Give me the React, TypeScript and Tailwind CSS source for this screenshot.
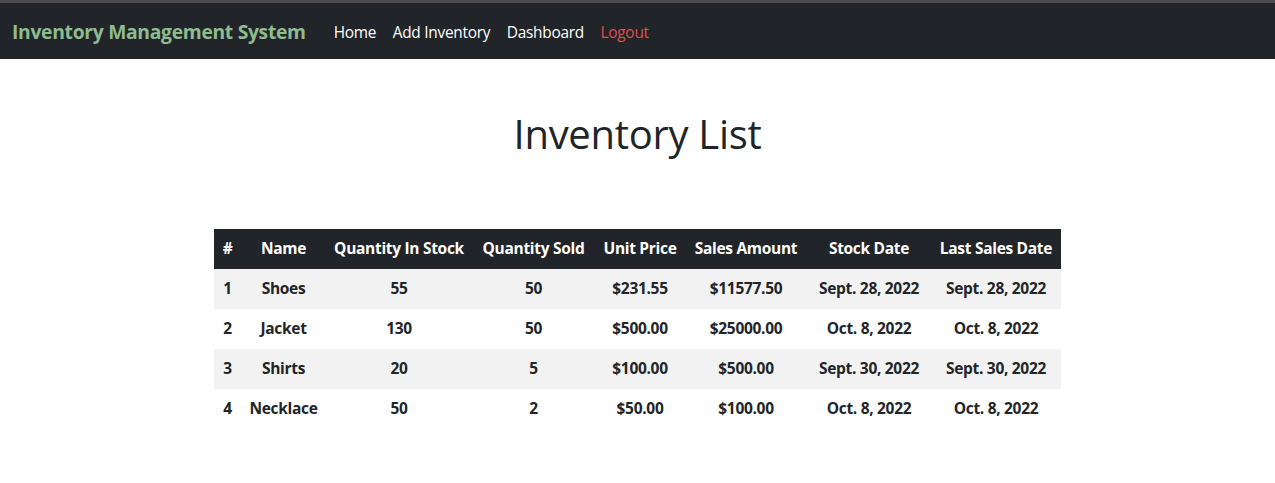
const rows = [
  ["1", "Shoes", "55", "50", "$231.55", "$11577.50", "Sept. 28, 2022", "Sept. 28, 2022"],
  ["2", "Jacket", "130", "50", "$500.00", "$25000.00", "Oct. 8, 2022", "Oct. 8, 2022"],
  ["3", "Shirts", "20", "5", "$100.00", "$500.00", "Sept. 30, 2022", "Sept. 30, 2022"],
  ["4", "Necklace", "50", "2", "$50.00", "$100.00", "Oct. 8, 2022", "Oct. 8, 2022"],
];

const headers = [
  "#",
  "Name",
  "Quantity In Stock",
  "Quantity Sold",
  "Unit Price",
  "Sales Amount",
  "Stock Date",
  "Last Sales Date",
];

const widths = ["w-[27px]", "w-[85px]", "w-[146px]", "w-[123px]", "w-[90px]", "w-[122px]", "w-[124px]", "w-[130px]"];

export default function App() {
  return (
    <div className="min-h-[483px] bg-white font-['Open_Sans',sans-serif] text-[#212529]">
      <div className="h-[3px] bg-[#4b4b4b]" />
      <nav className="flex h-[56px] items-center bg-[#212529] px-3 pt-[2px]">
        <a className="mr-[20px] text-[19.3px] font-bold tracking-[-0.3px] text-[#8fbc8f]">
          Inventory Management System
        </a>
        <div className="flex items-center gap-[0.5px] pt-[2px] text-[15.4px] tracking-[-0.25px]">
          <a className="px-2 text-white">Home</a>
          <a className="px-2 text-white">Add Inventory</a>
          <a className="px-2 text-white">Dashboard</a>
          <a className="px-2 text-[#d9534f]">Logout</a>
        </div>
      </nav>

      <h1 className="mt-[51px] text-center text-[40px] font-medium leading-[1.2] tracking-[-0.3px]">
        Inventory List
      </h1>

      <div className="mt-[71px] flex justify-center">
        <table className="w-[847px] table-fixed border-collapse text-center text-[15.5px] font-bold tracking-[-0.3px]">
          <thead>
            <tr className="h-[40px] bg-[#212529] text-white">
              {headers.map((h, i) => (
                <th key={h} className={`${widths[i]} whitespace-nowrap px-1 font-bold`}>
                  {h}
                </th>
              ))}
            </tr>
          </thead>
          <tbody>
            {rows.map((r, i) => (
              <tr key={r[0]} className={`h-[40px] ${i % 2 === 0 ? "bg-[#f2f2f2]" : "bg-white"}`}>
                {r.map((c, j) => (
                  <td key={j} className="whitespace-nowrap px-1">
                    {c}
                  </td>
                ))}
              </tr>
            ))}
          </tbody>
        </table>
      </div>
    </div>
  );
}
